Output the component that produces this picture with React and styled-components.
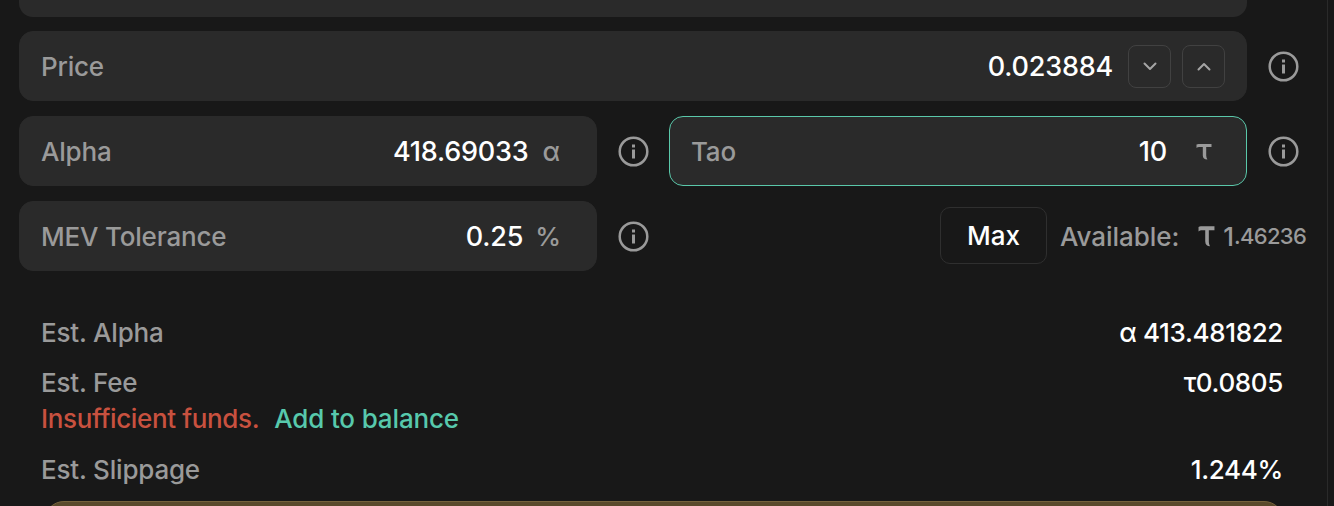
import React from "react";
import styled, { createGlobalStyle } from "styled-components";

const Global = createGlobalStyle`
  html, body { margin: 0; padding: 0; background: #181818; }
  * { box-sizing: border-box; }
`;
const Page = styled.div`
  width: 1334px; height: 506px; overflow: hidden; background: #181818;
  font-family: Inter, "Noto Sans", sans-serif; font-size: 26px; color: #fff;
  position: relative;
`;
const Column = styled.div`
  width: 1328px; height: 506px; border-right: 1px solid #2a2a2a;
  padding: 0 0 0 19px; display: flex; flex-direction: column;
  & > * { flex: none; }
`;
const TopCard = styled.div`
  width: 1228px; height: 17px; background: #2a2a2a; border-radius: 0 0 14px 14px; margin-bottom: 14px;
`;
const Row = styled.div`
  display: flex; align-items: center; height: 70px; margin-bottom: 15px;
`;
const Field = styled.div`
  width: ${p => p.$w}px; height: 70px; background: #2a2a2a; border-radius: 14px;
  border: 1px solid ${p => p.$active ? "#5ac8aa" : "#2a2a2a"};
  display: flex; align-items: center; padding: 0 ${p => p.$pr ?? 36}px 0 21px; flex: none;
  margin-left: ${p => p.$ml ?? 0}px;
`;
const Label = styled.span`
  color: #9a9a9a; flex: 1; letter-spacing: -0.2px; font-weight: 500;
`;
const Value = styled.span`
  color: #fff; font-size: 27px; font-weight: 500; letter-spacing: -0.2px;
`;
const StatValue = styled.span`
  color: #fff; font-size: 26px; font-weight: 500; letter-spacing: -0.35px;
`;
const Unit = styled.span`
  color: #9a9a9a; margin-left: ${p => p.$ml ?? 14}px; display: inline-flex; align-items: center; font-weight: 500;
`;
const StepButton = styled.button`
  width: 43px; height: 43px; border-radius: 8px; border: 1px solid #414141; background: transparent;
  color: #a5a5a5; display: flex; align-items: center; justify-content: center; padding: 0; margin-left: ${p => p.$ml}px;
`;
const InfoSlot = styled.div`
  display: flex; align-items: center; justify-content: center; width: ${p => p.$w}px; flex: none; margin-left: ${p => p.$ml}px;
`;
const Right = styled.div`
  display: flex; align-items: center; margin-left: 291px;
`;
const MaxButton = styled.button`
  width: 107px; height: 57px; border-radius: 10px; border: 1px solid #2f2f2f; background: transparent;
  color: #fff; font: inherit; font-weight: 500; padding: 0; margin-bottom: 2px;
`;
const Available = styled.span`
  color: #9a9a9a; margin-left: 13px; display: flex; align-items: center; font-weight: 500; letter-spacing: -0.05px;
`;
const Lead = styled.span`
  margin-left: 8px;
`;
const Small = styled.span`
  font-size: 22px; letter-spacing: -0.7px;
`;
const Stats = styled.div`
  padding: 29px 44px 0 22px; display: flex; flex-direction: column; width: 1308px;
`;
const StatRow = styled.div`
  display: flex; justify-content: space-between; height: 36px; line-height: 36px; margin-bottom: ${p => p.$mb}px;
`;
const StatLabel = styled.span` color: #9a9a9a; letter-spacing: -0.2px; font-weight: 500; `;
const Notice = styled.div`
  height: 36px; line-height: 36px; margin-bottom: 15px; color: #c8513f; font-weight: 500; letter-spacing: -0.36px;
`;
const AddLink = styled.span`
  color: #57c9ac; margin-left: 15px; letter-spacing: -0.15px;
`;
const Banner = styled.div`
  height: 40px; margin: 0 0 0 25px; width: 1240px; background: #5a4a2c; border: 1px solid #75623c; border-radius: 22px;
`;

const Info = () => (
  <svg width="31" height="31" viewBox="0 0 31 31" fill="none">
    <circle cx="15.5" cy="15.5" r="13.8" stroke="#9a9a9a" strokeWidth="2.5" />
    <rect x="14" y="13.5" width="3" height="9" fill="#9a9a9a" />
    <rect x="14" y="8.5" width="3" height="3" fill="#9a9a9a" />
  </svg>
);
const Chevron = ({ up }) => (
  <svg width="14" height="9" viewBox="0 0 14 9" fill="none">
    <path d={up ? "M1.5 7.5l5.5-5.5 5.5 5.5" : "M1.5 1.5l5.5 5.5 5.5-5.5"} stroke="#a5a5a5" strokeWidth="2" strokeLinecap="round" strokeLinejoin="round" />
  </svg>
);
const Tao = ({ w = 16, h = 17, color = "#9a9a9a" }) => (
  <svg width={w} height={h} viewBox="0 0 16 17" preserveAspectRatio="none" fill="none">
    <path d="M0.5 1.5C2 1 3 1 5 1H15.5V4H10.2V12.5C10.2 14 10.6 15.2 11.4 16.5C8.5 16.5 6.8 15 6.8 12.5V4H4C2.5 4 1.2 4.3 0.5 5Z" fill={color} />
  </svg>
);

export default function App() {
  return (
    <Page>
      <Global />
      <Column>
        <TopCard />
        <Row>
          <Field $w={1228} $pr={21}>
            <Label>Price</Label>
            <Value>0.023884</Value>
            <StepButton $ml={15} aria-label="Decrease"><Chevron /></StepButton>
            <StepButton $ml={11} aria-label="Increase"><Chevron up /></StepButton>
          </Field>
          <InfoSlot $w={31} $ml={21}><Info /></InfoSlot>
        </Row>
        <Row>
          <Field $w={578}>
            <Label>Alpha</Label>
            <Value>418.69033</Value>
            <Unit>α</Unit>
          </Field>
          <InfoSlot $w={31} $ml={21}><Info /></InfoSlot>
          <Field $w={578} $active $ml={20} $pr={34}>
            <Label>Tao</Label>
            <Value>10</Value>
            <Unit $ml={29}><Tao /></Unit>
          </Field>
          <InfoSlot $w={31} $ml={21}><Info /></InfoSlot>
        </Row>
        <Row>
          <Field $w={578} $pr={35}>
            <Label>MEV Tolerance</Label>
            <Value>0.25</Value>
            <Unit $ml={12}>%</Unit>
          </Field>
          <InfoSlot $w={31} $ml={21}><Info /></InfoSlot>
          <Right>
            <MaxButton>Max</MaxButton>
            <Available>Available:<Unit $ml={19}><Tao w={17} h={22} /></Unit><Lead>1</Lead><Small>.46236</Small></Available>
          </Right>
        </Row>
        <Stats>
          <StatRow $mb={14}><StatLabel>Est. Alpha</StatLabel><StatValue>α 413.481822</StatValue></StatRow>
          <StatRow $mb={0}><StatLabel>Est. Fee</StatLabel><StatValue>τ0.0805</StatValue></StatRow>
          <Notice>Insufficient funds.<AddLink>Add to balance</AddLink></Notice>
          <StatRow $mb={13}><StatLabel>Est. Slippage</StatLabel><StatValue>1.244%</StatValue></StatRow>
        </Stats>
        <Banner />
      </Column>
    </Page>
  );
}
